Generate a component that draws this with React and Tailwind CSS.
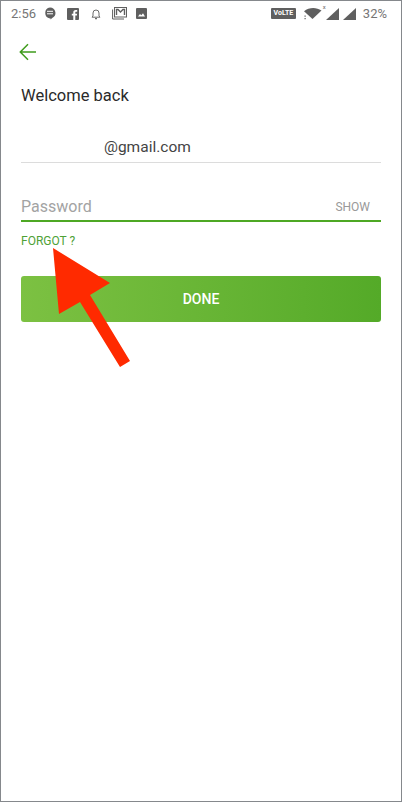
import React from 'react';

const StatusBar = () => (
  <div className="flex h-[25px] items-center justify-between pl-[10px] pr-[14px] text-[#757575]">
    <div className="flex items-center">
      <span className="text-[13px] leading-none">2:56</span>
      <svg className="ml-[8px]" width="12" height="13" viewBox="0 0 12 13">
        <path d="M6 .5a5.5 5.5 0 0 1 2.2 10.5L6.6 12.6V11.4H6A5.5 5.5 0 0 1 6 .5z" fill="#5f5f5f" />
        <path d="M3 4.3h6M3 6.8h6" stroke="#fff" strokeWidth="1" />
      </svg>
      <svg className="ml-[11px]" width="12" height="12" viewBox="0 0 12 12">
        <rect width="12" height="12" rx="1" fill="#5f5f5f" />
        <path d="M8.3 12V7.5h1.6l.2-1.8H8.3V4.6c0-.5.2-.9.9-.9h1V2.1H8.7C7.2 2.1 6.3 3 6.3 4.4v1.3H4.8v1.8h1.5V12z" fill="#fff" />
      </svg>
      <svg className="ml-[12px]" width="10" height="12" viewBox="0 0 10 12" fill="none">
        <path d="M1 9.2h8L8 8V5a3 3 0 0 0-6 0v3z" stroke="#6a6a6a" strokeWidth="1" />
        <path d="M4 10.6h2" stroke="#6a6a6a" strokeWidth="1.2" />
      </svg>
      <svg className="ml-[11px]" width="15" height="13" viewBox="0 0 15 13" fill="none">
        <rect x="2.5" y=".5" width="12" height="9.5" fill="#fff" stroke="#5f5f5f" />
        <path d="M4.5 8V2.5h1.5L8.500 5 11 2.500h1.500V8" stroke="#5f5f5f" strokeWidth="1.400" />
        <path d="M.6 2.500V12H12" stroke="#5f5f5f" strokeWidth="1" />
      </svg>
      <svg className="ml-[9px]" width="11" height="11" viewBox="0 0 11 11">
        <rect width="11" height="11" rx="1" fill="#5f5f5f" />
        <path d="M2 8.500l2-2.500 1.300 1.300L7 5.300l2 3.200z" fill="#fff" />
      </svg>
    </div>
    <div className="flex items-center">
      <span className="flex h-[11px] w-[25px] items-center justify-center rounded-[1px] bg-[#5f5f5f] text-[7px] font-bold leading-none text-white">
        VoLTE
      </span>
      <svg className="ml-[7px]" width="19" height="13" viewBox="0 0 19 13">
        <path d="M1 4.200C6 .2 13-.3 18.500 3.500L9.500 12z" fill="#5f5f5f" />
        <path d="M1.500 8.500h1.200v1.200H1.500zM1.500 11h1.200v1.200H1.500z" fill="#5f5f5f" />
      </svg>
      <div className="relative ml-[1px]">
        <span className="absolute left-0 top-[-3px] text-[6px] leading-none text-[#6a6a6a]">x</span>
        <svg width="15" height="14" viewBox="0 0 15 14" className="ml-[2px]">
          <path d="M14 1v12H1z" fill="#5f5f5f" />
        </svg>
      </div>
      <svg className="ml-[3px]" width="14" height="14" viewBox="0 0 14 14">
        <path d="M13 1v12H0z" fill="#5f5f5f" />
      </svg>
      <span className="ml-[6px] text-[13px] leading-none">32%</span>
    </div>
  </div>
);

const App = () => {
  return (
    <div className="relative h-[802px] w-[402px] border border-[#85888c] bg-white font-['Roboto',sans-serif] antialiased">
      <StatusBar />

      <div className="px-[20px]">
        <svg className="ml-[-2px] mt-[17px] block" width="18" height="18" viewBox="0 0 18 18" fill="none">
          <path d="M17 9H1.500M9 1.200L1.300 9 9 16.800" stroke="#3f9c1c" strokeWidth="1.500" />
        </svg>

        <h1 className="mt-[23px] text-[16.5px] leading-[24px] text-[#2a2a2a]">Welcome back</h1>

        <div className="mt-[27px] h-[28px] border-b border-[#dcdcdc] pl-[83px] text-[15.5px] leading-[24px] text-[#444444]">
          @gmail.com
        </div>

        <div className="mt-[32px] flex h-[27px] items-start justify-between border-b-2 border-[#4ea824] pr-[11px]">
          <span className="text-[16px] leading-[24px] text-[#a3a3a3]">Password</span>
          <span className="pt-[5px] text-[12px] leading-[14px] text-[#999999]">SHOW</span>
        </div>

        <button className="mt-[12px] block text-[12px] leading-[14px] text-[#4ea136]">FORGOT ?</button>

        <button className="mt-[28px] block h-[46px] w-[360px] rounded-[3px] bg-gradient-to-r from-[#7cc142] to-[#54aa28] pt-[1px] text-[14px] font-medium text-white">
          DONE
        </button>
      </div>

      {/* red annotation arrow over the form */}
      <svg className="absolute left-[-1px] top-[-1px]" width="402" height="802" viewBox="0 0 402 802">
        <path d="M53 248L110 283 90 295 130 361 120 367 80 302 59 314z" fill="#ff2a00" />
      </svg>
    </div>
  );
};

export default App;
